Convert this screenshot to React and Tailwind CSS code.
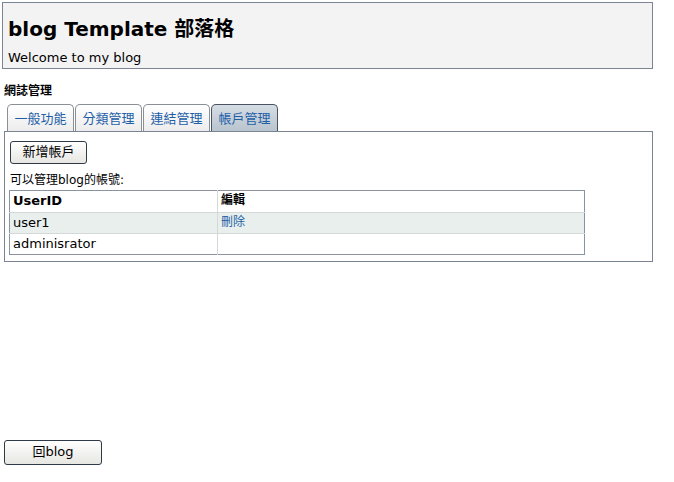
import React from 'react';

const font = { fontFamily: '"DejaVu Sans", Verdana, "Noto Sans CJK TC", sans-serif' };

const tabs = ['一般功能', '分類管理', '連結管理', '帳戶管理'];

const Tab = ({ label, active }) => (
  <div
    className={
      active
        ? 'h-[27px] w-[67px] rounded-t-[5px] border border-b-0 border-[#4a5460] bg-gradient-to-b from-[#d6dde4] to-[#b8c4ce] pt-[2px] text-[13px] text-[#1f5fa8] flex items-center justify-center'
        : 'h-[27px] w-[67px] rounded-t-[5px] border border-b-0 border-[#8a8f96] bg-gradient-to-b from-[#ffffff] to-[#ececec] pt-[2px] text-[13px] text-[#1f5fa8] flex items-center justify-center'
    }
  >
    {label}
  </div>
);

export default function App() {
  return (
    <div className="w-[674px] h-[482px] bg-white text-black relative" style={font}>
      <div className="pt-[2px] pl-[2px]">
        {/* Header */}
        <div className="w-[651px] h-[67px] border border-[#7b8492] bg-[#f3f3f3] pl-[5px]">
          <div className="pt-[14px] text-[20px] font-bold leading-[24px]">
            blog Template 部落格
          </div>
          <div className="pt-[9px] text-[13px] leading-[16px]">Welcome to my blog</div>
        </div>

        <div className="pl-[2px] pt-[14px] text-[12px] font-bold leading-[16px]">網誌管理</div>

        {/* Tabs */}
        <div className="pl-[5px] pt-[5px] flex gap-[1px] items-end">
          {tabs.map((t, i) => (
            <Tab key={t} label={t} active={i === 3} />
          ))}
        </div>

        {/* Tab panel */}
        <div className="ml-[2px] w-[649px] h-[131px] border border-[#7b8492] pt-[7px] pl-[5px]">
          <button className="w-[77px] h-[23px] rounded-[3px] border border-[#2e3a48] bg-gradient-to-b from-[#ffffff] to-[#e6e6e2] text-[13px] leading-[16px] text-black">
            新增帳戶
          </button>
          <div className="pt-[8px] text-[12px] leading-[16px]">可以管理blog的帳號:</div>
          <table className="mt-[2px] -ml-[1px] w-[576px] border border-[#8a93a0] border-collapse text-[13px]">
            <tbody>
              <tr className="h-[22px]">
                <td className="w-[208px] pl-[3px] font-bold border-b border-r border-[#d4d8d8]">UserID</td>
                <td className="pl-[3px] font-bold text-[12px] border-b border-[#d4d8d8] align-top">編輯</td>
              </tr>
              <tr className="h-[21px] bg-[#e8efec]">
                <td className="pl-[3px] border-b border-r border-[#d4d8d8]">user1</td>
                <td className="pl-[3px] text-[12px] text-[#1f5fa8] border-b border-[#d4d8d8] align-top">刪除</td>
              </tr>
              <tr className="h-[21px]">
                <td className="pl-[3px] border-r border-[#d4d8d8]">adminisrator</td>
                <td className="pl-[3px]"></td>
              </tr>
            </tbody>
          </table>
        </div>
      </div>

      <div className="absolute left-[4px] top-[439px]">
        <button className="w-[98px] h-[25px] rounded-[3px] border border-[#2e3a48] bg-gradient-to-b from-[#ffffff] to-[#e6e6e2] text-[13px] leading-[16px] text-black">
          回blog
        </button>
      </div>
    </div>
  );
}
